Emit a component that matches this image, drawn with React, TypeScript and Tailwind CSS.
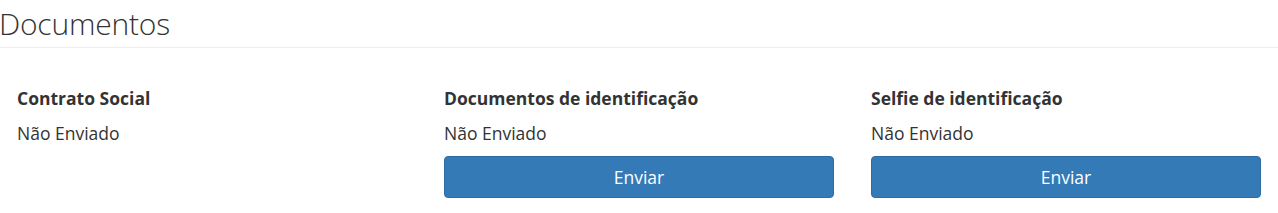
import React from "react";

const font = { fontFamily: '"Open Sans", "Noto Sans", sans-serif' };

function Col({ title, button }: { title: string; button?: boolean }) {
  return (
    <div className="w-[390px] flex flex-col">
      <div className="text-[17.5px] leading-[25px] font-bold text-[#333]">{title}</div>
      <div className="mt-[10px] text-[17.5px] leading-[25px] text-[#333]">Não Enviado</div>
      {button && (
        <button className="mt-[10px] h-[42px] w-full rounded-[4px] border border-[#2e6da4] bg-[#337ab7] text-[17.5px] leading-[25px] text-white">
          Enviar
        </button>
      )}
    </div>
  );
}

export default function App() {
  return (
    <div className="w-[1278px] h-[213px] bg-white" style={font}>
      <div className="pt-[7px] pb-[7px] border-b border-[#eee]">
        <h1 className="text-[30px] leading-[33px] font-light text-[#333] -ml-[1px] tracking-[-0.2px]">Documentos</h1>
      </div>
      <div className="flex gap-[37px] px-[17px] pt-[38px]">
        <Col title="Contrato Social" />
        <Col title="Documentos de identificação" button />
        <Col title="Selfie de identificação" button />
      </div>
    </div>
  );
}
